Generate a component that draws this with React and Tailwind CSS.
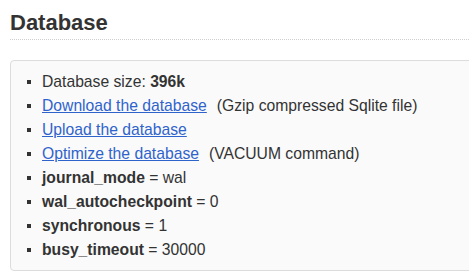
import React from 'react';

const rows = [
  { key: 'size', content: <>Database size: <b>396k</b></> },
  { key: 'dl', content: <><a href="#" className="text-[#2f63cc] underline">Download the database</a><span className="ml-[10px]">(Gzip compressed Sqlite file)</span></> },
  { key: 'ul', content: <a href="#" className="text-[#2f63cc] underline">Upload the database</a> },
  { key: 'opt', content: <><a href="#" className="text-[#2f63cc] underline">Optimize the database</a><span className="ml-[10px]">(VACUUM command)</span></> },
  { key: 'jm', content: <><b>journal_mode</b> = wal</> },
  { key: 'wal', content: <><b>wal_autocheckpoint</b> = 0</> },
  { key: 'sync', content: <><b>synchronous</b> = 1</> },
  { key: 'busy', content: <><b>busy_timeout</b> = 30000</> },
];

export default function App() {
  return (
    <div className="min-h-screen bg-white overflow-hidden font-['Liberation_Sans',Arial,sans-serif] text-[#333]">
      <div className="pl-[10px]">
        {/* Heading */}
        <h2 className="-mr-[10px] pt-[10px] pb-[3px] text-[22px] leading-[26px] font-bold border-b border-dotted border-[#cfcfcf]">
          Database
        </h2>

        {/* Info box */}
        <div className="-mr-[10px] mt-[20px] pt-[9px] pb-[8px] pl-[16px] bg-[#fafafa] border border-[#dcdcdc] rounded-[4px]">
          <ul className="text-[15.7px] leading-[24px]">
            {rows.map(row => (
              <li key={row.key} className="flex items-center h-[24px] whitespace-nowrap">
                <span className="w-[4px] h-[4px] bg-[#333] mr-[11px] shrink-0" />
                <span>{row.content}</span>
              </li>
            ))}
          </ul>
        </div>
      </div>
    </div>
  );
}
